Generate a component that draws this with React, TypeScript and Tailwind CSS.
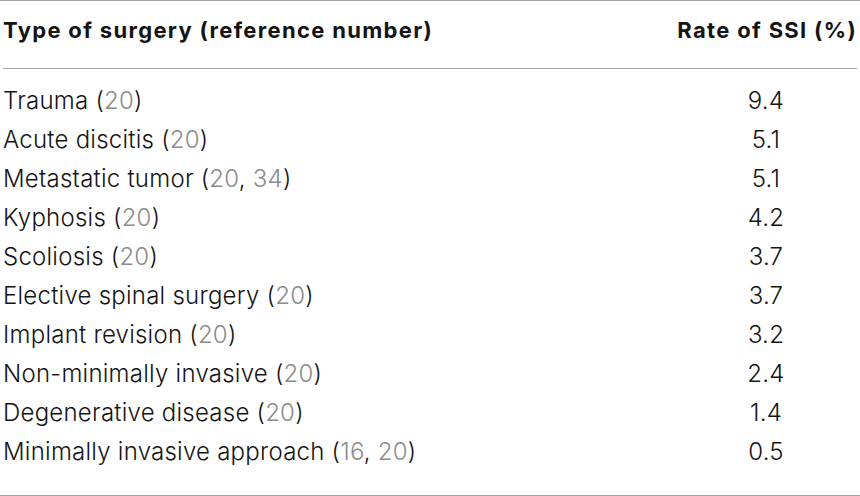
const rows: { name: string; refs: string[]; rate: string }[] = [
  { name: 'Trauma', refs: ['20'], rate: '9.4' },
  { name: 'Acute discitis', refs: ['20'], rate: '5.1' },
  { name: 'Metastatic tumor', refs: ['20', '34'], rate: '5.1' },
  { name: 'Kyphosis', refs: ['20'], rate: '4.2' },
  { name: 'Scoliosis', refs: ['20'], rate: '3.7' },
  { name: 'Elective spinal surgery', refs: ['20'], rate: '3.7' },
  { name: 'Implant revision', refs: ['20'], rate: '3.2' },
  { name: 'Non-minimally invasive', refs: ['20'], rate: '2.4' },
  { name: 'Degenerative disease', refs: ['20'], rate: '1.4' },
  { name: 'Minimally invasive approach', refs: ['16', '20'], rate: '0.5' },
];

export default function App() {
  return (
    <div className="w-[860px] h-[496px] bg-white text-[#141414] font-['Inter',sans-serif] overflow-hidden">
      <div className="border-t border-b border-[#a6a6a6]">
        {/* header */}
        <div className="flex pt-[15px] pb-[24px] mx-[3px] border-b border-[#a6a6a6] text-[22px] leading-[28px] font-bold tracking-[0.06em]">
          <div className="flex-1">Type of surgery (reference number)</div>
          <div className="w-[185px] text-right">Rate of SSI (%)</div>
        </div>
        <div className="pt-[12px] pb-[24px]">
          {rows.map((r) => (
            <div key={r.name} className="flex mx-[3px] text-[24px] leading-[39px] font-light tracking-[0.01em]">
              <div className="flex-1">
                {r.name} (
                {r.refs.map((ref, i) => (
                  <span key={ref}>
                    {i > 0 && ', '}
                    <span className="text-[#8c8c8c]">{ref}</span>
                  </span>
                ))}
                )
              </div>
              <div className="w-[182px] text-center">{r.rate}</div>
            </div>
          ))}
        </div>
      </div>
    </div>
  );
}
